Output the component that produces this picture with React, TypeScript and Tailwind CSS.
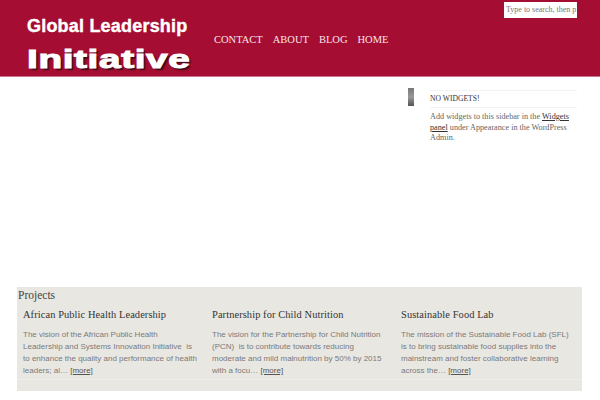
export default function App() {
  const serif = "font-['Liberation_Serif',serif]";
  const cols = [
    { t: "African Public Health Leadership", lines: ["The vision of the African Public Health", "Leadership and Systems Innovation Initiative  is", "to enhance the quality and performance of health", "leaders; al…"] },
    { t: "Partnership for Child Nutrition", lines: ["The vision for the Partnership for Child Nutrition", "(PCN)  is to contribute towards reducing", "moderate and mild malnutrition by 50% by 2015", "with a focu…"] },
    { t: "Sustainable Food Lab", lines: ["The mission of the Sustainable Food Lab (SFL)", "is to bring sustainable food supplies into the", "mainstream and foster collaborative learning", "across the…"] },
  ];
  return (
    <div className="w-[600px] h-[400px] overflow-hidden bg-white">
      <header className="h-[77px] bg-[#a50d32] border-b border-[#c9768c] flex relative">
        <div className="w-[214px] pl-[27px] pt-[16px] text-white font-['Liberation_Sans',sans-serif] font-bold">
          <div className="text-[18px] leading-[20px] tracking-[0.2px] whitespace-nowrap [-webkit-text-stroke:0.4px_white]">Global Leadership</div>
          <div className="mt-[9px] text-[25px] leading-[28px] tracking-[0.4px] whitespace-nowrap origin-left scale-x-[1.55] [-webkit-text-stroke:1px_white] [text-shadow:1.5px_2px_1px_#3a0a16]">Initiative</div>
        </div>
        <nav className={`${serif} flex gap-[10px] pt-[33px] text-[10.5px] leading-[14px] text-[#fbe3e8]`}>
          <span>CONTACT</span>
          <span>ABOUT</span>
          <span>BLOG</span>
          <span>HOME</span>
        </nav>
        <div className={`${serif} absolute left-[504px] top-[2px] w-[73px] h-[16px] bg-white text-[#777] text-[8px] leading-[16px] pl-[2px] overflow-hidden whitespace-nowrap`}>
          Type to search, then p
        </div>
      </header>
      <main className="h-[210px] flex">
        <div className="w-[408px] pt-[11px] flex justify-end">
          <div className="w-[6px] h-[18px] bg-gradient-to-b from-[#777] via-[#999] to-[#555] relative left-[6px]" />
        </div>
        <aside className={`${serif} ml-[22px] w-[147px] pt-[13px] text-[#666]`}>
          <div className="border-y border-[#f3f3f3] h-[18px] text-[#333] text-[7.6px] leading-[16px]">NO WIDGETS!</div>
          <p className="mt-[4px] text-[8.2px] leading-[10.5px]">
            Add widgets to this sidebar in the <span className="underline text-[#333]">Widgets panel</span> under Appearance in the WordPress Admin.
          </p>
        </aside>
      </main>
      <section className="ml-[17px] w-[565px] h-[104px] bg-[#e9e7e2] relative">
        <h2 className={`${serif} pl-[1px] pt-[2px] text-[11.5px] leading-[12px] h-[15px] text-[#444]`}>Projects</h2>
        <div className="flex pl-[6px] pt-[6px]">
          {cols.map((c) => (
            <div key={c.t} className="w-[189px] shrink-0">
              <h3 className={`${serif} text-[10.4px] leading-[14px] text-[#333] tracking-[0.1px] whitespace-nowrap`}>{c.t}</h3>
              <div className="mt-[7px] font-['Liberation_Sans',sans-serif] text-[8px] leading-[12px] text-[#7a7a7a] whitespace-pre">
                {c.lines.map((l, i) => (
                  <div key={i}>
                    {l}
                    {i === 3 && <> <span className="underline text-[#555]">[more]</span></>}
                  </div>
                ))}
              </div>
            </div>
          ))}
        </div>
        <div className="absolute left-0 right-0 top-[92px] h-px bg-[#efedea]" />
      </section>
    </div>
  );
}
